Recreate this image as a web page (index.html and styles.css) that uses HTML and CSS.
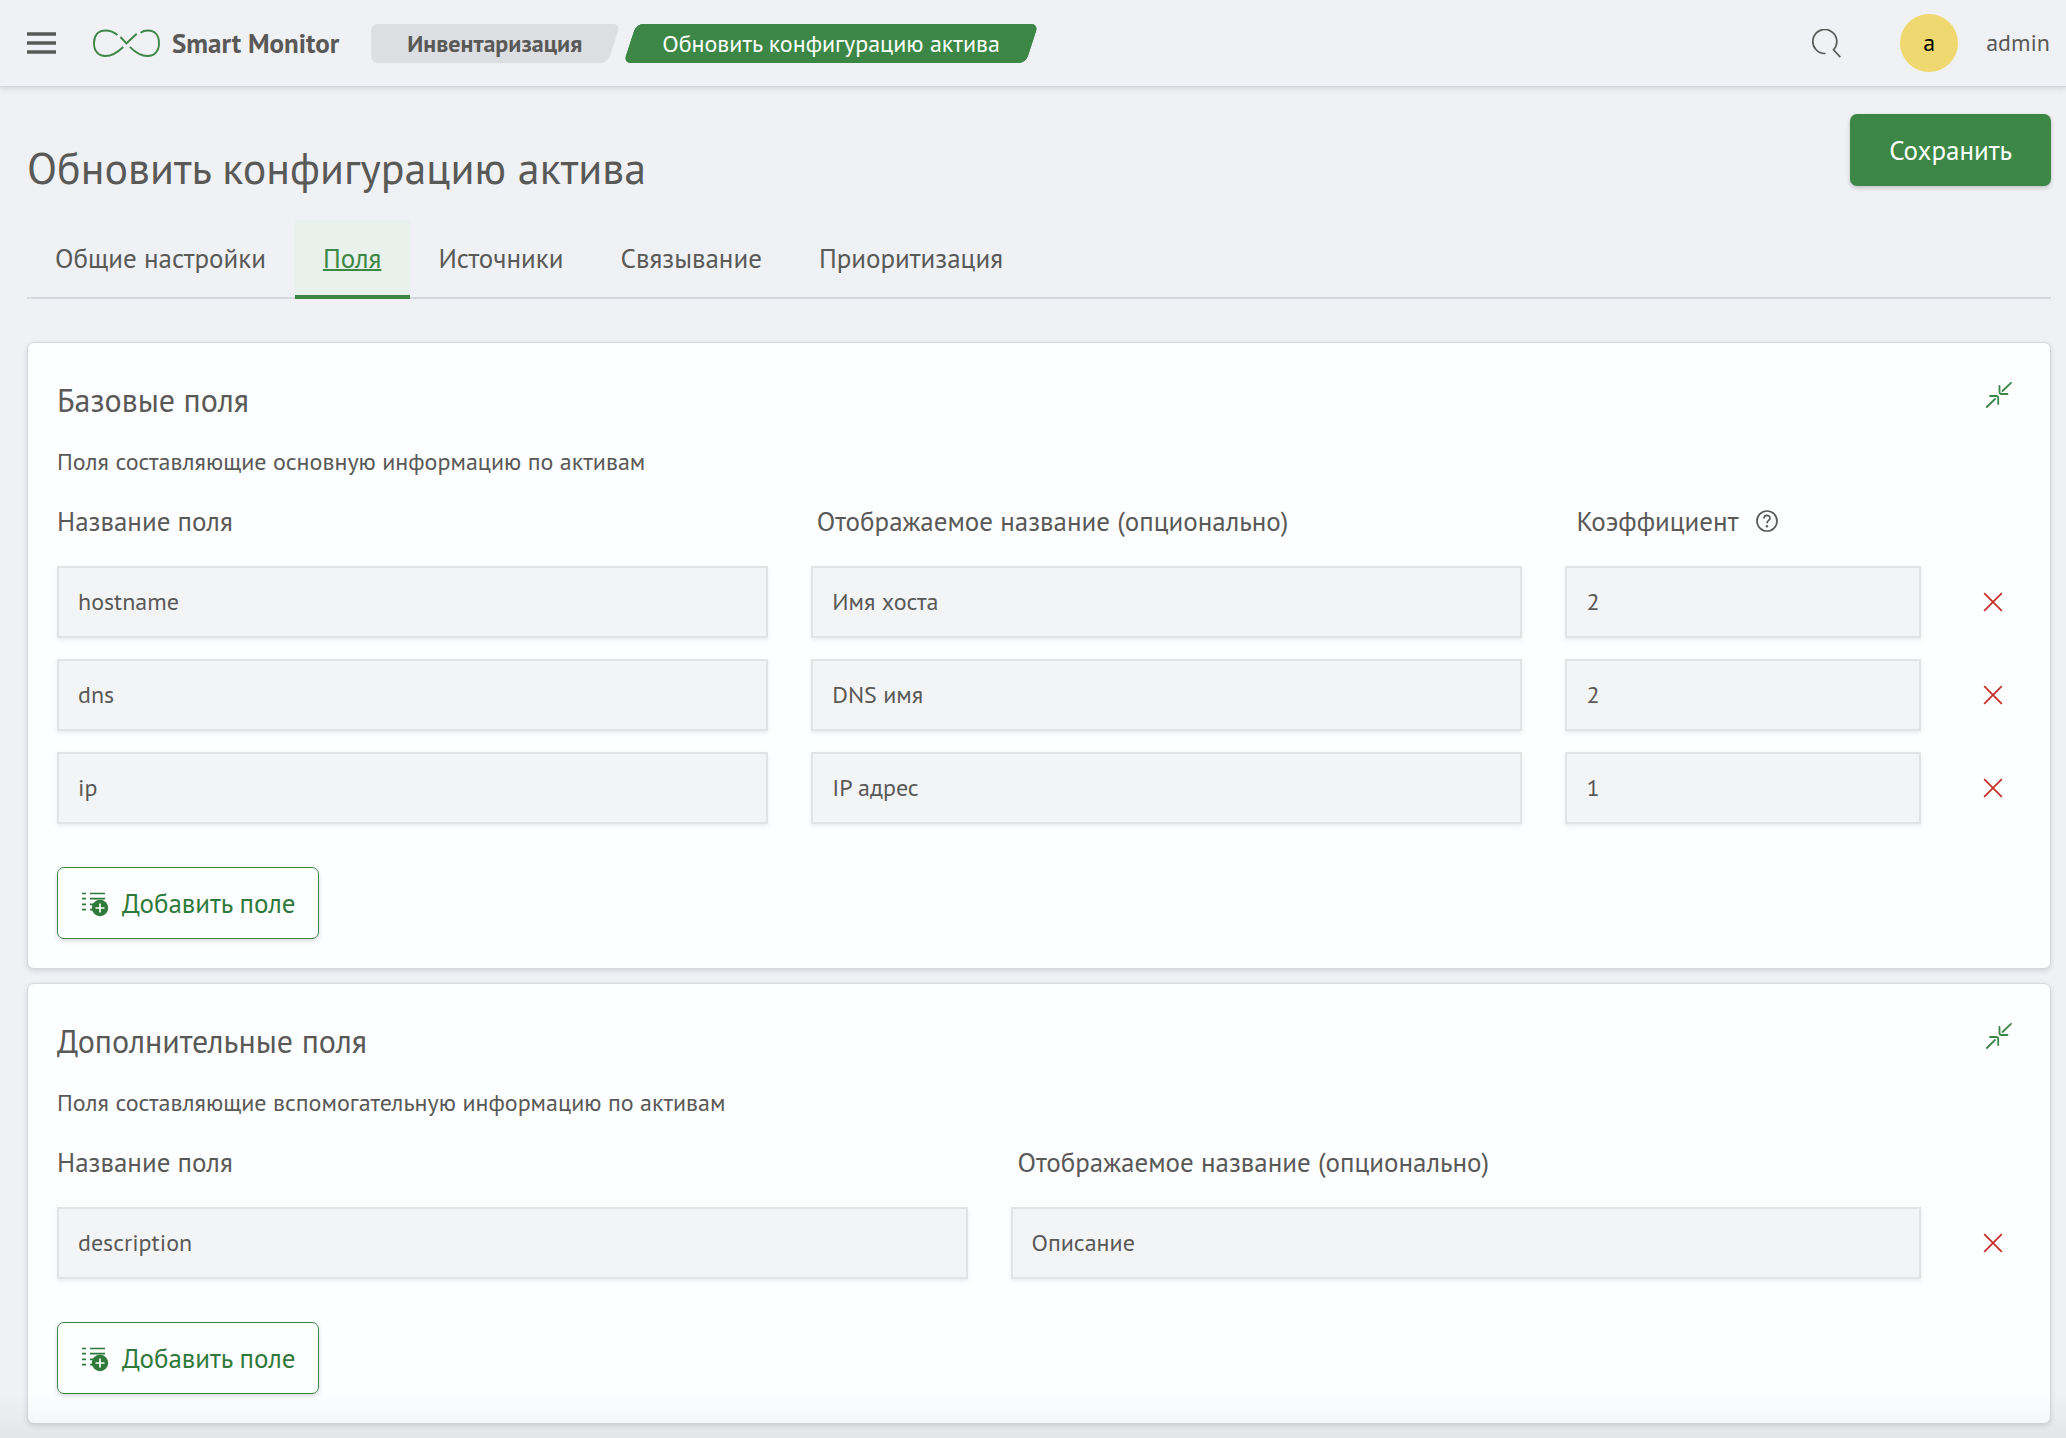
FILE: index.html
```html
<!DOCTYPE html>
<html lang="ru">
<head>
<meta charset="utf-8">
<meta name="viewport" content="width=device-width, initial-scale=1">
<title>Smart Monitor — Обновить конфигурацию актива</title>
<link rel="stylesheet" href="styles.css">
</head>
<body>
<svg class="sprite" aria-hidden="true">
  <symbol id="collapse" viewBox="0 0 26 26">
    <path d="M13.500 4v6q0 2 2 2h6M16.500 9 25 .8M4 14h6.200q2 0 2 2v6M9 17 .8 25" fill="none" stroke="currentColor" stroke-width="1.800" stroke-linecap="round"/>
  </symbol>
  <symbol id="cross" viewBox="0 0 20 20">
    <path d="M1.200 1.200 18.800 18.800M18.800 1.200 1.200 18.800" fill="none" stroke="currentColor" stroke-width="1.700"/>
  </symbol>
  <symbol id="list-add" viewBox="0 0 27 27">
    <path d="M0 3.500h4M8 3.500h15M0 8.700h4M8 8.700h15M0 14.300h4M8 14.300h4M0 19.700h4M8 19.700h3" fill="none" stroke="currentColor" stroke-width="1.700"/>
    <circle cx="18" cy="18" r="8.200" fill="currentColor"/>
    <path d="M18 13.500v9M13.500 18h9" stroke="#fdfeff" stroke-width="1.700"/>
  </symbol>
</svg>

<header class="topbar">
  <button class="icon-button" type="button" aria-label="Меню">
    <svg width="29" height="22" viewBox="0 0 29 22"><path d="M0 2h29M0 11h29M0 20h29" stroke="currentColor" stroke-width="3.600"/></svg>
  </button>
  <a class="brand" href="#">
    <svg width="67" height="28" viewBox="0 0 67 28" fill="none" stroke="#3c8746" stroke-width="1.900" aria-hidden="true">
      <path d="M24.500 6C21 3 17 1.500 12.500 1.500C4.500 1.500 1 7 1 14.200C1 21.500 5 27 12.500 27C19.500 27 25 23 30.200 18"/>
      <path d="M47.500 3.800C49.800 2.200 52 1.500 55 1.500C62.500 1.500 66 7 66 14.200C66 21.500 62 27 54.500 27C47.500 27 42 23 36.800 17.800"/>
      <path d="M27.400 8 33.500 14.300 43.700 4.700"/>
    </svg>
    <span>Smart Monitor</span>
  </a>
  <nav class="crumbs" aria-label="Навигация">
    <a class="crumb crumb-root" href="#">Инвентаризация</a>
    <a class="crumb crumb-current" href="#" aria-current="page">Обновить конфигурацию актива</a>
  </nav>
  <div class="account">
    <button class="icon-button" type="button" aria-label="Поиск">
      <svg width="29" height="29" viewBox="0 0 29 29" fill="none" stroke="currentColor" stroke-width="1.700"><path d="M13.500 24.500A12 12 0 1 1 21.500 20.800L28.300 28.200"/></svg>
    </button>
    <span class="avatar">a</span>
    <span class="user">admin</span>
  </div>
</header>

<main class="page">
  <div class="page-head">
    <h1 class="page-title">Обновить конфигурацию актива</h1>
    <button class="save" type="button">Сохранить</button>
  </div>

  <nav class="tabs" aria-label="Разделы">
    <a class="tab" href="#">Общие настройки</a>
    <a class="tab tab-active" href="#" aria-current="true">Поля</a>
    <a class="tab" href="#">Источники</a>
    <a class="tab" href="#">Связывание</a>
    <a class="tab" href="#">Приоритизация</a>
  </nav>

  <section class="card">
    <div class="card-head">
      <h2 class="card-title">Базовые поля</h2>
      <button class="icon-button collapse" type="button" aria-label="Свернуть"><svg width="26" height="26"><use href="#collapse"/></svg></button>
    </div>
    <p class="card-text">Поля составляющие основную информацию по активам</p>
    <div class="labels three">
      <span id="b-name">Название поля</span>
      <span id="b-title">Отображаемое название (опционально)</span>
      <span class="with-help"><span id="b-rate">Коэффициент</span>
        <svg width="22" height="22" viewBox="0 0 22 22" fill="none" stroke="currentColor" stroke-width="1.700" role="img" aria-label="Справка"><circle cx="11" cy="11" r="10"/><path d="M8 8.600C8 4.300 14 4.500 14 8.200C14 10.500 11 10.500 11 13.300"/><circle cx="11" cy="16.300" r="1.200" fill="currentColor" stroke="none"/></svg>
      </span>
    </div>
    <div class="rows">
      <div class="row three">
        <input class="field" type="text" value="hostname" aria-labelledby="b-name">
        <input class="field" type="text" value="Имя хоста" aria-labelledby="b-title">
        <input class="field" type="text" value="2" aria-labelledby="b-rate">
        <button class="icon-button remove" type="button" aria-label="Удалить"><svg width="20" height="20"><use href="#cross"/></svg></button>
      </div>
      <div class="row three">
        <input class="field" type="text" value="dns" aria-labelledby="b-name">
        <input class="field" type="text" value="DNS имя" aria-labelledby="b-title">
        <input class="field" type="text" value="2" aria-labelledby="b-rate">
        <button class="icon-button remove" type="button" aria-label="Удалить"><svg width="20" height="20"><use href="#cross"/></svg></button>
      </div>
      <div class="row three">
        <input class="field" type="text" value="ip" aria-labelledby="b-name">
        <input class="field" type="text" value="IP адрес" aria-labelledby="b-title">
        <input class="field" type="text" value="1" aria-labelledby="b-rate">
        <button class="icon-button remove" type="button" aria-label="Удалить"><svg width="20" height="20"><use href="#cross"/></svg></button>
      </div>
    </div>
    <button class="add" type="button"><svg width="27" height="27" aria-hidden="true"><use href="#list-add"/></svg>Добавить поле</button>
  </section>

  <section class="card">
    <div class="card-head">
      <h2 class="card-title">Дополнительные поля</h2>
      <button class="icon-button collapse" type="button" aria-label="Свернуть"><svg width="26" height="26"><use href="#collapse"/></svg></button>
    </div>
    <p class="card-text">Поля составляющие вспомогательную информацию по активам</p>
    <div class="labels two">
      <span id="e-name">Название поля</span>
      <span id="e-title">Отображаемое название (опционально)</span>
    </div>
    <div class="rows">
      <div class="row two">
        <input class="field" type="text" value="description" aria-labelledby="e-name">
        <input class="field" type="text" value="Описание" aria-labelledby="e-title">
        <button class="icon-button remove" type="button" aria-label="Удалить"><svg width="20" height="20"><use href="#cross"/></svg></button>
      </div>
    </div>
    <button class="add" type="button"><svg width="27" height="27" aria-hidden="true"><use href="#list-add"/></svg>Добавить поле</button>
  </section>
</main>
</body>
</html>
```
FILE: styles.css
```css
:root {
  --green: #3c8746;
  --green-dark: #2f7a3a;
  --text: #595957;
  --line: #d5d8dc;
  --page: #f0f1f4;
  --card: #fdfeff;
}

* { box-sizing: border-box; }

body {
  margin: 0;
  min-height: 100vh;
  background: var(--page);
  color: var(--text);
  font-family: "PT Sans", "Noto Sans", "Open Sans", sans-serif;
  font-size: 27px;
  line-height: 32px;
}

/* soft shade along the bottom edge of the window */
body::after {
  content: "";
  position: fixed;
  inset: auto 0 0 0;
  height: 44px;
  background: linear-gradient(rgba(60, 60, 50, 0), rgba(60, 60, 50, 0.06));
  pointer-events: none;
}

a { color: inherit; text-decoration: none; }
h1, h2, p { margin: 0; font-weight: 400; }
button, input { font: inherit; color: inherit; }
svg { display: block; flex: none; }
.sprite { position: absolute; width: 0; height: 0; }

.icon-button {
  display: flex;
  align-items: center;
  justify-content: center;
  flex: none;
  padding: 0;
  border: 0;
  background: none;
  cursor: pointer;
}

/* top bar */
.topbar {
  display: flex;
  align-items: center;
  height: 87px;
  padding: 0 16px 0 27px;
  border-bottom: 1px solid #d3d6dd;
  box-shadow: 0 2px 5px rgba(100, 105, 125, 0.2);
}
.brand {
  display: flex;
  align-items: center;
  gap: 12px;
  margin: 0 32px 0 37px;
  font-weight: 700;
  white-space: nowrap;
}
.crumbs { display: flex; gap: 2px; }
.crumb {
  position: relative;
  z-index: 0;
  padding: 0 39px;
  font-size: 24px;
  line-height: 39px;
  white-space: nowrap;
}
.crumb::before,
.crumb::after {
  content: "";
  position: absolute;
  z-index: -1;
  inset: 0 7px;
  border-radius: 7px;
  background: var(--shape);
  transform: skewX(-18deg);
}
.crumb-root {
  --shape: #dddee2;
  padding-left: 36px;
  font-weight: 700;
}
.crumb-root::before { inset: 0 40px 0 0; transform: none; }
.crumb-current { --shape: var(--green); color: #fff; }

.account {
  display: flex;
  align-items: center;
  margin-left: auto;
}
.avatar {
  width: 58px;
  height: 58px;
  margin: 0 28px 0 59px;
  border-radius: 50%;
  background: #f0d870;
  color: #000;
  font-size: 24px;
  line-height: 58px;
  text-align: center;
}
.user { font-size: 24px; }

/* page */
.page { padding: 27px 15px 14px 27px; }
.page-head {
  display: flex;
  align-items: flex-start;
  justify-content: space-between;
  margin-bottom: 26px;
}
.page-title {
  padding-top: 28px;
  font-size: 44px;
  line-height: 52px;
}
.save {
  height: 72px;
  padding: 0 39px;
  border: 0;
  border-radius: 7px;
  background: var(--green);
  color: #fff;
  box-shadow: 0 2px 4px rgba(60, 65, 80, 0.25);
  cursor: pointer;
}

.tabs {
  display: flex;
  margin-bottom: 43px;
  box-shadow: inset 0 -2px var(--line);
}
.tab {
  height: 79px;
  padding: 0 29px 0 28px;
  border-bottom: 4px solid transparent;
  line-height: 76px;
}
.tab-active {
  border-color: var(--green);
  background: #e8f1ec;
  color: var(--green);
  text-decoration: underline;
  text-decoration-thickness: 2px;
}

/* cards */
.card {
  padding: 39px 28px 29px 29px;
  border: 1px solid var(--line);
  border-radius: 7px;
  background: var(--card);
  box-shadow: 0 2px 5px rgba(90, 95, 115, 0.2);
}
.card + .card { margin-top: 14px; }
.card-head {
  display: flex;
  align-items: flex-start;
  justify-content: space-between;
  margin-bottom: 30px;
}
.card-title { font-size: 32px; line-height: 36px; }
.card-text {
  margin-bottom: 29px;
  font-size: 24px;
  line-height: 28px;
}
.collapse { margin-right: 10px; color: var(--green); }

.labels,
.row { display: grid; column-gap: 43px; }
.labels { padding-right: 87px; margin-bottom: 29px; }
.labels.three { grid-template-columns: 2fr 2fr 1fr; }
.labels.two { grid-template-columns: 1fr 1fr; }
.row.three { grid-template-columns: 2fr 2fr 1fr 58px; }
.row.two { grid-template-columns: 1fr 1fr 58px; }
.with-help { display: flex; align-items: center; gap: 18px; }

.rows { display: grid; row-gap: 21px; margin-bottom: 43px; }
.field {
  width: 100%;
  min-width: 0;
  height: 72px;
  padding: 0 19px 2px;
  border: 2px solid #e0e4e7;
  border-radius: 0;
  background: #f3f4f6;
  box-shadow: 0 2px 4px rgba(90, 110, 120, 0.12);
  font-size: 24px;
}
.remove { color: #c62d25; }

.add {
  display: flex;
  align-items: center;
  gap: 13px;
  height: 72px;
  padding: 0 22px 0 24px;
  border: 1px solid var(--green);
  border-radius: 7px;
  background: var(--card);
  color: var(--green-dark);
  box-shadow: 0 2px 4px rgba(60, 65, 80, 0.2);
  cursor: pointer;
}
```
